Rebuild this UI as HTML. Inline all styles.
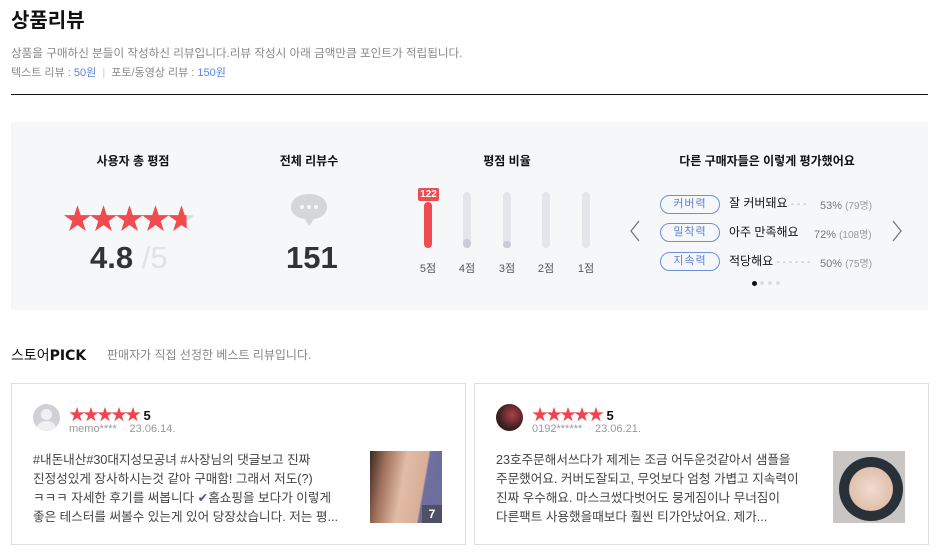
<!DOCTYPE html>
<html><head><meta charset="utf-8">
<style>
*{margin:0;padding:0;box-sizing:border-box}
body{width:941px;height:558px;background:#fff;font-family:"Liberation Sans","Noto Sans CJK KR",sans-serif;position:relative;overflow:hidden;color:#222}
.a{position:absolute;white-space:nowrap}
.ttl{font-size:12px;font-weight:bold;color:#111;text-align:center}
.bar{position:absolute;width:8px;height:56px;top:192px;background:#e4e6ec;border-radius:4px}
.bl{position:absolute;top:260px;font-size:11px;color:#555;width:30px;text-align:center}
.chip{position:absolute;left:660px;width:60px;height:19px;border:1px solid #6c8fe0;border-radius:10px;font-size:11px;color:#5d7fd6;text-align:center;line-height:17px;letter-spacing:1px}
.ct{position:absolute;left:729px;font-size:12px;color:#111}
.pc{position:absolute;font-size:11px;color:#777}
.pc small{font-size:10px;color:#999}
.card{position:absolute;top:383px;width:455px;height:162px;border:1px solid #dcdde2}
.rs{color:#f0454f;font-size:16px;letter-spacing:-2px}
.txt{font-size:12.6px;color:#444;line-height:19px;white-space:nowrap}
</style></head><body>
<div class="a" style="left:11px;top:4px;font-size:20px;font-weight:bold;color:#111">상품리뷰</div>
<div class="a" style="left:11px;top:45px;font-size:11.6px;color:#888">상품을 구매하신 분들이 작성하신 리뷰입니다.리뷰 작성시 아래 금액만큼 포인트가 적립됩니다.</div>
<div class="a" style="left:11px;top:64px;font-size:11px;color:#888">텍스트 리뷰 : <span style="color:#5b82d8">50원</span> &nbsp;<span style="color:#ccc">|</span>&nbsp; 포토/동영상 리뷰 : <span style="color:#5b82d8">150원</span></div>
<div class="a" style="left:11px;top:94px;width:917px;height:1px;background:#111"></div>

<div class="a" style="left:11px;top:122px;width:917px;height:188px;background:#f6f7f9"></div>
<div class="a ttl" style="left:73px;top:152px;width:120px">사용자 총 평점</div>
<div class="a ttl" style="left:249px;top:152px;width:120px">전체 리뷰수</div>
<div class="a ttl" style="left:447px;top:152px;width:120px">평점 비율</div>
<div class="a ttl" style="left:647px;top:152px;width:240px">다른 구매자들은 이렇게 평가했어요</div>

<div class="a" style="left:63px;top:196px;font-size:29px;color:#f04b4f;letter-spacing:-3px">★★★★<span style="background:linear-gradient(90deg,#f04b4f 75%,#ddd 75%);-webkit-background-clip:text;color:transparent">★</span></div>
<div class="a" style="left:90px;top:240px;font-size:31px;font-weight:bold;color:#333">4.8<span style="color:#e2e2e2;font-weight:normal"> /</span><span style="color:#e2e2e2;font-weight:normal">5</span></div>

<svg class="a" style="left:290px;top:193px" width="38" height="38" viewBox="0 0 38 38"><path d="M19 1C29 1 37 6 37 14C37 21 31 25 24 26L19 33L15 26C7 25 1 21 1 14C1 6 9 1 19 1Z" fill="#d4d6da"/><circle cx="12" cy="14" r="2" fill="#f6f7f9"/><circle cx="19" cy="14" r="2" fill="#f6f7f9"/><circle cx="26" cy="14" r="2" fill="#f6f7f9"/></svg>
<div class="a" style="left:286px;top:240px;font-size:31px;font-weight:bold;color:#333">151</div>

<div class="bar" style="left:424px;top:202px;height:46px;background:#f04b4f"></div>
<div class="a" style="left:418px;top:188px;width:21px;height:13px;background:#f04b4f;color:#fff;font-size:10px;font-weight:bold;text-align:center;line-height:13px;border-radius:2px">122</div>
<div class="bar" style="left:463px"></div><div class="a" style="left:463px;top:239px;width:8px;height:9px;background:#c9ccd6;border-radius:4px"></div>
<div class="bar" style="left:503px"></div><div class="a" style="left:503px;top:241px;width:8px;height:7px;background:#c9ccd6;border-radius:4px"></div>
<div class="bar" style="left:542px"></div>
<div class="bar" style="left:582px"></div>
<div class="bl" style="left:413px">5점</div><div class="bl" style="left:452px">4점</div><div class="bl" style="left:492px">3점</div><div class="bl" style="left:531px">2점</div><div class="bl" style="left:571px">1점</div>

<svg class="a" style="left:629px;top:220px" width="12" height="22"><path d="M10 1L2 11L10 21" fill="none" stroke="#777" stroke-width="1.3"/></svg>
<svg class="a" style="left:891px;top:220px" width="12" height="22"><path d="M2 1L10 11L2 21" fill="none" stroke="#777" stroke-width="1.3"/></svg>
<div class="chip" style="top:195px">커버력</div><div class="ct" style="top:194px">잘 커버돼요 <span style="color:#aaa;font-size:10px">- - -</span></div><div class="pc" style="left:820px;top:197px">53% <small>(79명)</small></div>
<div class="chip" style="top:223px">밀착력</div><div class="ct" style="top:223px">아주 만족해요</div><div class="pc" style="left:814px;top:226px">72% <small>(108명)</small></div>
<div class="chip" style="top:252px">지속력</div><div class="ct" style="top:252px">적당해요 <span style="color:#aaa;font-size:10px">- - - - - -</span></div><div class="pc" style="left:820px;top:255px">50% <small>(75명)</small></div>
<div class="a" style="left:752px;top:281px;width:5px;height:5px;border-radius:50%;background:#111"></div>
<div class="a" style="left:760px;top:281px;width:4px;height:4px;border-radius:50%;background:#ddd"></div>
<div class="a" style="left:768px;top:281px;width:4px;height:4px;border-radius:50%;background:#ddd"></div>
<div class="a" style="left:776px;top:281px;width:4px;height:4px;border-radius:50%;background:#ddd"></div>

<div class="a" style="left:11px;top:345px;font-size:14px;color:#111">스토어<b style="font-family:'DejaVu Sans',sans-serif;font-weight:900;font-size:14px;letter-spacing:0">PICK</b></div>
<div class="a" style="left:107px;top:346px;font-size:12px;color:#888">판매자가 직접 선정한 베스트 리뷰입니다.</div>

<div class="card" style="left:11px">
 <div class="a" style="left:21px;top:20px;width:27px;height:27px;border-radius:50%;background:#cfd1d6;overflow:hidden"><div style="position:absolute;left:8px;top:5px;width:11px;height:11px;border-radius:50%;background:#f0f0f2"></div><div style="position:absolute;left:4px;top:17px;width:19px;height:14px;border-radius:50%;background:#f0f0f2"></div></div>
 <div class="a" style="left:57px;top:17px"><span class="rs">★★★★★</span> <b style="font-size:13px;color:#111">5</b></div>
 <div class="a" style="left:57px;top:39px;font-size:11px;color:#999">memo**** <span style="color:#ccc">&nbsp;·</span> 23.06.14.</div>
 <div class="a txt" style="left:21px;top:67px">#내돈내산#30대지성모공녀 #사장님의 댓글보고 진짜<br>진정성있게 장사하시는것 같아 구매함! 그래서 저도(?)<br>ㅋㅋㅋ 자세한 후기를 써봅니다 <span style="color:#5b4f9a">✔</span>홈쇼핑을 보다가 이렇게<br>좋은 테스터를 써볼수 있는게 있어 당장샀습니다. 저는 평...</div>
 <div class="a" style="left:358px;top:67px;width:72px;height:72px;background:linear-gradient(100deg,#3a2a22 0%,#a0705a 20%,#e2bca6 45%,#d8ae96 70%,#7070a0 72%,#6a6c9c 100%)"><div style="position:absolute;right:0;bottom:0;width:20px;height:18px;background:rgba(60,60,60,.6);color:#fff;font-size:12px;font-weight:bold;text-align:center;line-height:18px">7</div></div>
</div>

<div class="card" style="left:474px">
 <div class="a" style="left:21px;top:20px;width:27px;height:27px;border-radius:50%;background:radial-gradient(circle at 60% 40%,#b0404a,#3a2020 60%,#201818)"></div>
 <div class="a" style="left:57px;top:17px"><span class="rs">★★★★★</span> <b style="font-size:13px;color:#111">5</b></div>
 <div class="a" style="left:57px;top:39px;font-size:11px;color:#999">0192****** <span style="color:#ccc">&nbsp;·</span> 23.06.21.</div>
 <div class="a txt" style="left:21px;top:67px">23호주문해서쓰다가 제게는 조금 어두운것같아서 샘플을<br>주문했어요. 커버도잘되고, 무엇보다 엄청 가볍고 지속력이<br>진짜 우수해요. 마스크썼다벗어도 뭉게짐이나 무너짐이<br>다른팩트 사용했을때보다 훨씬 티가안났어요. 제가...</div>
 <div class="a" style="left:358px;top:67px;width:72px;height:72px;background:#c8c6c4;overflow:hidden"><div style="position:absolute;left:6px;top:6px;width:64px;height:64px;border-radius:50%;background:#2a3038"></div><div style="position:absolute;left:16px;top:16px;width:44px;height:44px;border-radius:50%;background:radial-gradient(circle,#f0dcd0,#d8b49c)"></div></div>
</div>
</body></html>
